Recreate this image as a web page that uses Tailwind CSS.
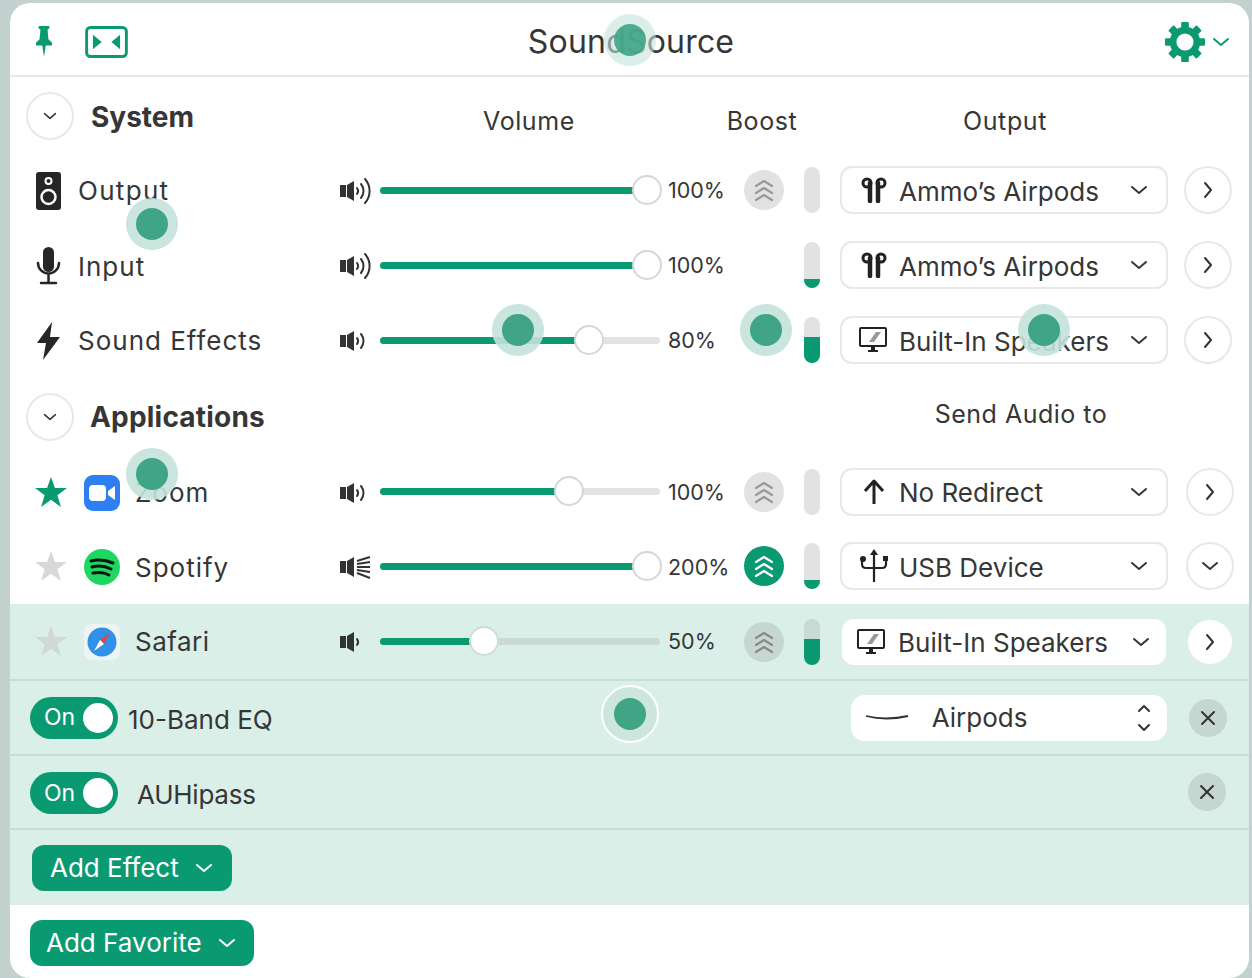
<!DOCTYPE html>
<html lang="en">
<head>
  <meta charset="UTF-8">
  <title>SoundSource</title>
  <script src="https://cdn.jsdelivr.net/npm/@tailwindcss/browser@4"></script>
</head>
<body class="bg-[#c3d2ce] h-[978px] w-[1252px] overflow-hidden font-['Inter',sans-serif] text-[#363636] text-[26px]">
  <!-- shared icons -->
  <svg class="hidden">
    <symbol id="spk" viewBox="0 0 14 28"><path d="M0 8h6v12H0zM7 8l7-4v20l-7-4z" fill="#333"/></symbol>
    <symbol id="airpods" viewBox="0 0 26 26">
      <circle cx="6" cy="6" r="4" fill="none" stroke="#222" stroke-width="3"/>
      <path d="M9 6v18" stroke="#222" stroke-width="4.500" stroke-linecap="round"/>
      <circle cx="20" cy="6" r="4" fill="none" stroke="#222" stroke-width="3"/>
      <path d="M17 6v18" stroke="#222" stroke-width="4.500" stroke-linecap="round"/>
    </symbol>
    <symbol id="monitor" viewBox="0 0 28 28">
      <rect x="1" y="2" width="26" height="18" rx="1" fill="none" stroke="#222" stroke-width="2"/>
      <path d="M10 16l7-10h5l-7 10z" fill="#999"/>
      <path d="M12 20h4v4h3v2H9v-2h3z" fill="#222"/>
    </symbol>
    <symbol id="down" viewBox="0 0 18 10"><path d="M2 2l7 6 7-6" fill="none" stroke="currentColor" stroke-width="2" stroke-linecap="round" stroke-linejoin="round"/></symbol>
    <symbol id="right" viewBox="0 0 10 18"><path d="M2 2l6 7-6 7" fill="none" stroke="#333" stroke-width="2" stroke-linecap="round" stroke-linejoin="round"/></symbol>
    <symbol id="boost" viewBox="0 0 20 24"><path d="M2 8l8-5 8 5M2 15l8-5 8 5M2 22l8-5 8 5" fill="none" stroke="currentColor" stroke-width="2.200" stroke-linecap="round" stroke-linejoin="round"/></symbol>
    <symbol id="star" viewBox="0 0 34 32"><path d="M17 0l4.200 11.800H34l-10.200 7.600L27.600 32 17 24.200 6.400 32l3.800-12.600L0 11.800h12.800z" fill="currentColor"/></symbol>
  </svg>

  <div class="pt-[3px] pl-[10px] w-[1249px]">
    <div class="bg-white rounded-[20px] overflow-hidden h-[975px] relative">

      <!-- title bar -->
      <div class="h-[74px] border-b-2 border-[#e6e8e8] grid grid-cols-3 items-center pl-[26px] pr-[19px] pt-[5px]">
        <div class="flex items-center gap-[33px]">
          <svg class="w-[16px] h-[35px]" viewBox="0 0 18 35"><path d="M3 0h12v3l-2 1 1 11 4 4v3H0v-3l4-4 1-11-2-1zM7 22h4l-2 13z" fill="#0a9a72"/></svg>
          <svg class="w-[43px] h-[32px]" viewBox="0 0 44 33"><rect x="1.500" y="1.500" width="41" height="30" rx="4" fill="none" stroke="#0a9a72" stroke-width="3"/><path d="M8 9l9 7.500-9 7.500zM36 9l-9 7.500 9 7.500z" fill="#0a9a72"/></svg>
        </div>
        <div class="text-center text-[32px] tracking-[0.2px] pr-[4px]">SoundSource</div>
        <div class="flex items-center justify-end gap-[7px]">
          <svg class="w-[40px] h-[40px]" viewBox="0 0 42 42">
            <circle cx="21" cy="21" r="12.500" fill="none" stroke="#0a9a72" stroke-width="7"/>
            <g fill="#0a9a72">
              <rect x="17" y="0" width="8" height="8" rx="1"/><rect x="17" y="34" width="8" height="8" rx="1"/>
              <rect x="0" y="17" width="8" height="8" rx="1"/><rect x="34" y="17" width="8" height="8" rx="1"/>
              <rect x="17" y="0" width="8" height="8" rx="1" transform="rotate(45 21 21)"/><rect x="17" y="34" width="8" height="8" rx="1" transform="rotate(45 21 21)"/>
              <rect x="0" y="17" width="8" height="8" rx="1" transform="rotate(45 21 21)"/><rect x="34" y="17" width="8" height="8" rx="1" transform="rotate(45 21 21)"/>
            </g>
          </svg>
          <svg class="w-[18px] h-[10px] text-[#0a9a72]"><use href="#down"/></svg>
        </div>
      </div>

      <!-- System heading -->
      <div class="h-[76px] flex items-center pt-[2px]">
        <div class="w-[389px] flex items-center pl-[16px] gap-[17px]">
          <div class="w-[48px] h-[48px] rounded-full border-2 border-[#e8e8e8] flex items-center justify-center"><svg class="w-[14px] h-[8px]"><use href="#down"/></svg></div>
          <span class="font-bold text-[28px] pt-[2px]">System</span>
        </div>
        <div class="w-[260px] text-center text-[25px] pt-[12px] tracking-[0.6px]">Volume</div>
        <div class="w-[206px] text-center text-[25px] pt-[12px] tracking-[0.6px]">Boost</div>
        <div class="w-[280px] text-center text-[25px] pt-[12px] tracking-[0.6px]">Output</div>
      </div>

      <!-- Output -->
      <div class="h-[75px] flex items-center">
        <div class="w-[328px] flex items-center pl-[26px] gap-[17px] tracking-[1.300px]">
          <svg class="w-[25px] h-[38px]" viewBox="0 0 25 38"><rect width="25" height="38" rx="3" fill="#262626"/><circle cx="12.500" cy="9" r="3" fill="none" stroke="#fff" stroke-width="2"/><circle cx="12.500" cy="25" r="7" fill="none" stroke="#fff" stroke-width="2.500"/></svg>
          <span>Output</span>
        </div>
        <div class="w-[42px] flex items-center">
          <svg class="w-[14px] h-[28px] ml-[2px]"><use href="#spk"/></svg>
          <svg class="w-[18px] h-[28px]" viewBox="0 0 18 28"><path d="M3 11a5 5 0 0 1 0 6M7 7a11 11 0 0 1 0 14M11 2a18 18 0 0 1 0 24" fill="none" stroke="#333" stroke-width="2" stroke-linecap="round"/></svg>
        </div>
        <div class="w-[280px] h-[7px] rounded-full bg-[#e3e3e3] relative"><div class="h-full w-[267px] rounded-full bg-[#0a9a72]"></div><div class="absolute left-[252px] top-[-12px] w-[30px] h-[30px] rounded-full bg-white border-2 border-[#d6d6d6]"></div></div>
        <div class="w-[84px] pl-[8px] text-[21.500px]">100%</div>
        <div class="w-[40px] h-[40px] mb-[2px] rounded-full bg-[#e2e2e2] text-[#999] flex items-center justify-center"><svg class="w-[20px] h-[24px]"><use href="#boost"/></svg></div>
        <div class="w-[16px] h-[46px] mb-[2px] ml-[20px] rounded-[8px] bg-[#e2e2e2]"></div>
        <div class="w-[328px] h-[48px] mb-[2px] ml-[20px] rounded-[12px] border-2 border-[#e8e8e8] flex items-center pl-[19px] pr-[18px]">
          <svg class="w-[26px] h-[26px] mr-[12px]"><use href="#airpods"/></svg>
          <span class="flex-1 pt-[3px]">Ammo’s Airpods</span>
          <svg class="w-[18px] h-[10px]"><use href="#down"/></svg>
        </div>
        <div class="w-[48px] h-[48px] mb-[2px] ml-[16px] rounded-full border-2 border-[#e8e8e8] flex items-center justify-center"><svg class="w-[10px] h-[18px]"><use href="#right"/></svg></div>
      </div>

      <!-- Input -->
      <div class="h-[75px] flex items-center">
        <div class="w-[328px] flex items-center pl-[26px] gap-[17px] tracking-[1px]">
          <svg class="w-[25px] h-[38px]" viewBox="0 0 25 38"><rect x="7" y="0" width="11" height="25" rx="5.500" fill="#262626"/><path d="M2 16a10.500 10.500 0 0 0 21 0M12.500 27v8M5 36h15" fill="none" stroke="#262626" stroke-width="2.500" stroke-linecap="round"/></svg>
          <span class="pt-[2px]">Input</span>
        </div>
        <div class="w-[42px] flex items-center">
          <svg class="w-[14px] h-[28px] ml-[2px]"><use href="#spk"/></svg>
          <svg class="w-[18px] h-[28px]" viewBox="0 0 18 28"><path d="M3 11a5 5 0 0 1 0 6M7 7a11 11 0 0 1 0 14M11 2a18 18 0 0 1 0 24" fill="none" stroke="#333" stroke-width="2" stroke-linecap="round"/></svg>
        </div>
        <div class="w-[280px] h-[7px] rounded-full bg-[#e3e3e3] relative"><div class="h-full w-[267px] rounded-full bg-[#0a9a72]"></div><div class="absolute left-[252px] top-[-12px] w-[30px] h-[30px] rounded-full bg-white border-2 border-[#d6d6d6]"></div></div>
        <div class="w-[84px] pl-[8px] text-[21.500px]">100%</div>
        <div class="w-[40px] h-[40px]"></div>
        <div class="w-[16px] h-[46px] mb-[2px] ml-[20px] rounded-[8px] bg-[#e2e2e2] overflow-hidden flex items-end"><div class="w-full h-[9px] bg-[#0a9a72]"></div></div>
        <div class="w-[328px] h-[48px] mb-[2px] ml-[20px] rounded-[12px] border-2 border-[#e8e8e8] flex items-center pl-[19px] pr-[18px]">
          <svg class="w-[26px] h-[26px] mr-[12px]"><use href="#airpods"/></svg>
          <span class="flex-1 pt-[3px]">Ammo’s Airpods</span>
          <svg class="w-[18px] h-[10px]"><use href="#down"/></svg>
        </div>
        <div class="w-[48px] h-[48px] mb-[2px] ml-[16px] rounded-full border-2 border-[#e8e8e8] flex items-center justify-center"><svg class="w-[10px] h-[18px]"><use href="#right"/></svg></div>
      </div>

      <!-- Sound Effects -->
      <div class="h-[75px] flex items-center">
        <div class="w-[328px] flex items-center pl-[26px] gap-[17px] tracking-[1px]">
          <svg class="w-[25px] h-[38px]" viewBox="0 0 25 38"><path d="M16 0L1 21h9L7 38l17-23h-10z" fill="#262626"/></svg>
          <span>Sound Effects</span>
        </div>
        <div class="w-[42px] flex items-center">
          <svg class="w-[14px] h-[28px] ml-[2px]"><use href="#spk"/></svg>
          <svg class="w-[18px] h-[28px]" viewBox="0 0 18 28"><path d="M3 11a5 5 0 0 1 0 6M7 7a11 11 0 0 1 0 14" fill="none" stroke="#333" stroke-width="2" stroke-linecap="round"/></svg>
        </div>
        <div class="w-[280px] h-[7px] rounded-full bg-[#e3e3e3] relative"><div class="h-full w-[209px] rounded-full bg-[#0a9a72]"></div><div class="absolute left-[194px] top-[-12px] w-[30px] h-[30px] rounded-full bg-white border-2 border-[#d6d6d6]"></div></div>
        <div class="w-[84px] pl-[8px] text-[21.500px]">80%</div>
        <div class="w-[40px] h-[40px]"></div>
        <div class="w-[16px] h-[46px] mb-[2px] ml-[20px] rounded-[8px] bg-[#e2e2e2] overflow-hidden flex items-end"><div class="w-full h-[26px] bg-[#0a9a72]"></div></div>
        <div class="w-[328px] h-[48px] mb-[2px] ml-[20px] rounded-[12px] border-2 border-[#e8e8e8] flex items-center pl-[17px] pr-[18px]">
          <svg class="w-[28px] h-[28px] mr-[12px]"><use href="#monitor"/></svg>
          <span class="flex-1 pt-[3px]">Built-In Speakers</span>
          <svg class="w-[18px] h-[10px]"><use href="#down"/></svg>
        </div>
        <div class="w-[48px] h-[48px] mb-[2px] ml-[16px] rounded-full border-2 border-[#e8e8e8] flex items-center justify-center"><svg class="w-[10px] h-[18px]"><use href="#right"/></svg></div>
      </div>

      <!-- Applications heading -->
      <div class="h-[77px] flex items-center">
        <div class="w-[811px] flex items-center pl-[16px] gap-[17px]">
          <div class="w-[48px] h-[48px] rounded-full border-2 border-[#e8e8e8] flex items-center justify-center"><svg class="w-[14px] h-[8px]"><use href="#down"/></svg></div>
          <span class="font-bold text-[28px] tracking-[0.2px] ml-[-1px]">Applications</span>
        </div>
        <div class="w-[400px] text-center text-[25px] pb-[4px] tracking-[0.5px]">Send Audio to</div>
      </div>

      <!-- Zoom -->
      <div class="h-[75px] flex items-center">
        <div class="w-[328px] flex items-center pl-[25px] tracking-[1px]">
          <svg class="w-[32px] h-[30px] mb-[2px] text-[#0a9a72] mr-[1px]"><use href="#star"/></svg>
          <div class="w-[36px] h-[36px] ml-[16px] rounded-[9px] bg-[#2d7ff2] flex items-center justify-center">
            <svg class="w-[26px] h-[16px]" viewBox="0 0 26 16"><rect width="17" height="16" rx="4" fill="#fff"/><path d="M19 6l7-5v14l-7-5z" fill="#fff"/></svg>
          </div>
          <span class="ml-[15px]">Zoom</span>
        </div>
        <div class="w-[42px] flex items-center">
          <svg class="w-[14px] h-[28px] ml-[2px]"><use href="#spk"/></svg>
          <svg class="w-[18px] h-[28px]" viewBox="0 0 18 28"><path d="M3 11a5 5 0 0 1 0 6M7 7a11 11 0 0 1 0 14" fill="none" stroke="#333" stroke-width="2" stroke-linecap="round"/></svg>
        </div>
        <div class="w-[280px] h-[7px] mb-[2px] rounded-full bg-[#e3e3e3] relative"><div class="h-full w-[189px] rounded-full bg-[#0a9a72]"></div><div class="absolute left-[174px] top-[-12px] w-[30px] h-[30px] rounded-full bg-white border-2 border-[#d6d6d6]"></div></div>
        <div class="w-[84px] pl-[8px] text-[21.500px]">100%</div>
        <div class="w-[40px] h-[40px] mb-[2px] rounded-full bg-[#e2e2e2] text-[#999] flex items-center justify-center"><svg class="w-[20px] h-[24px]"><use href="#boost"/></svg></div>
        <div class="w-[16px] h-[46px] mb-[2px] ml-[20px] rounded-[8px] bg-[#e2e2e2]"></div>
        <div class="w-[328px] h-[48px] mb-[2px] ml-[20px] rounded-[12px] border-2 border-[#e8e8e8] flex items-center pl-[21px] pr-[18px]">
          <svg class="w-[22px] h-[26px] mr-[14px]" viewBox="0 0 22 26"><path d="M11 25V3M2 12l9-10 9 10" fill="none" stroke="#222" stroke-width="3" stroke-linejoin="round"/></svg>
          <span class="flex-1 pt-[2px]">No Redirect</span>
          <svg class="w-[18px] h-[10px]"><use href="#down"/></svg>
        </div>
        <div class="w-[48px] h-[48px] mb-[2px] ml-[18px] rounded-full border-2 border-[#e8e8e8] flex items-center justify-center"><svg class="w-[10px] h-[18px]"><use href="#right"/></svg></div>
      </div>

      <!-- Spotify -->
      <div class="h-[74px] flex items-center">
        <div class="w-[328px] flex items-center pl-[25px] tracking-[1px]">
          <svg class="w-[32px] h-[30px] mb-[2px] mr-[1px] text-[#d8d8d8]"><use href="#star"/></svg>
          <svg class="w-[36px] h-[36px] ml-[16px]" viewBox="0 0 36 36"><circle cx="18" cy="18" r="18" fill="#1ed760"/><path d="M7 12c8-2 15-1 22 2M8 18c7-2 13-1 19 2M9 24c6-1 11-1 16 2" fill="none" stroke="#111" stroke-width="3" stroke-linecap="round"/></svg>
          <span class="ml-[15px]">Spotify</span>
        </div>
        <div class="w-[42px] flex items-center">
          <svg class="w-[14px] h-[28px] ml-[2px]"><use href="#spk"/></svg>
          <svg class="w-[18px] h-[28px]" viewBox="0 0 18 28"><path d="M3 8l13-4M3 11l13-2M3 14h13M3 17l13 2M3 20l13 5" fill="none" stroke="#333" stroke-width="2"/></svg>
        </div>
        <div class="w-[280px] h-[7px] mb-[2px] rounded-full bg-[#e3e3e3] relative"><div class="h-full w-[267px] rounded-full bg-[#0a9a72]"></div><div class="absolute left-[252px] top-[-12px] w-[30px] h-[30px] rounded-full bg-white border-2 border-[#d6d6d6]"></div></div>
        <div class="w-[84px] pl-[8px] text-[21.500px]">200%</div>
        <div class="w-[40px] h-[40px] mb-[2px] rounded-full bg-[#0a9a72] text-white flex items-center justify-center"><svg class="w-[20px] h-[24px]"><use href="#boost"/></svg></div>
        <div class="w-[16px] h-[46px] mb-[2px] ml-[20px] rounded-[8px] bg-[#e2e2e2] overflow-hidden flex items-end"><div class="w-full h-[9px] bg-[#0a9a72]"></div></div>
        <div class="w-[328px] h-[48px] mb-[2px] ml-[20px] rounded-[12px] border-2 border-[#e8e8e8] flex items-center pl-[18px] pr-[18px]">
          <svg class="w-[28px] h-[34px] mr-[11px]" viewBox="0 0 28 34"><path d="M14 33V2M2 10v5q0 4 4 4h16q4 0 4-4v-5" fill="none" stroke="#222" stroke-width="2.200"/><path d="M14 0l-4 6h8z" fill="#222"/><circle cx="3" cy="10" r="3" fill="#222"/><rect x="23" y="7" width="5" height="5" fill="#222"/></svg>
          <span class="flex-1 pt-[2px]">USB Device</span>
          <svg class="w-[18px] h-[10px]"><use href="#down"/></svg>
        </div>
        <div class="w-[48px] h-[48px] mb-[2px] ml-[18px] rounded-full border-2 border-[#e8e8e8] flex items-center justify-center"><svg class="w-[18px] h-[10px]"><use href="#down"/></svg></div>
      </div>

      <!-- Safari and effects band -->
      <div class="bg-[#d9efe8]">
        <div class="h-[77px] flex items-center border-b-2 border-[#c9ddd6]">
          <div class="w-[328px] flex items-center pl-[25px] tracking-[0.500px]">
            <svg class="w-[32px] h-[30px] mb-[2px] mr-[1px] text-[#d2d8d6]"><use href="#star"/></svg>
            <div class="w-[36px] h-[36px] ml-[16px] rounded-[8px] bg-[#eef3f4] flex items-center justify-center">
              <svg class="w-[30px] h-[30px]" viewBox="0 0 30 30"><circle cx="15" cy="15" r="14.500" fill="#2f92e8"/><path d="M23 6L13 13l4 4z" fill="#e8453c"/><path d="M7 24l6-11 4 4z" fill="#fff"/></svg>
            </div>
            <span class="ml-[15px]">Safari</span>
          </div>
          <div class="w-[42px] flex items-center">
            <svg class="w-[14px] h-[28px] ml-[2px]"><use href="#spk"/></svg>
            <svg class="w-[18px] h-[28px]" viewBox="0 0 18 28"><path d="M3 11a5 5 0 0 1 0 6" fill="none" stroke="#333" stroke-width="2" stroke-linecap="round"/></svg>
          </div>
          <div class="w-[280px] h-[7px] rounded-full bg-[#c9dad5] relative"><div class="h-full w-[104px] rounded-full bg-[#0a9a72]"></div><div class="absolute left-[89px] top-[-12px] w-[30px] h-[30px] rounded-full bg-white border-2 border-[#cfdcd8]"></div></div>
          <div class="w-[84px] pl-[8px] text-[21.500px]">50%</div>
          <div class="w-[40px] h-[40px] rounded-full bg-[#c6d6d1] text-[#888] flex items-center justify-center"><svg class="w-[20px] h-[24px]"><use href="#boost"/></svg></div>
          <div class="w-[16px] h-[46px] ml-[20px] rounded-[8px] bg-[#c9dad5] overflow-hidden flex items-end"><div class="w-full h-[26px] bg-[#0a9a72]"></div></div>
          <div class="w-[324px] h-[46px] ml-[22px] rounded-[12px] bg-white flex items-center pl-[15px] pr-[16px]">
            <svg class="w-[28px] h-[28px] mr-[13px]"><use href="#monitor"/></svg>
            <span class="flex-1 pt-[1px]">Built-In Speakers</span>
            <svg class="w-[18px] h-[10px]"><use href="#down"/></svg>
          </div>
          <div class="w-[44px] h-[44px] ml-[22px] rounded-full bg-white flex items-center justify-center"><svg class="w-[10px] h-[18px]"><use href="#right"/></svg></div>
        </div>

        <div class="h-[75px] flex items-center border-b-2 border-[#c9ddd6] pl-[20px]">
          <div class="w-[88px] h-[42px] rounded-full bg-[#0a9a72] flex items-center justify-between pl-[14px] pr-[5px] text-white text-[23px]">On<div class="w-[30px] h-[30px] rounded-full bg-white"></div></div>
          <span class="ml-[10px] pt-[3px]">10-Band EQ</span>
          <div class="w-[316px] h-[46px] ml-[578px] rounded-[14px] bg-white flex items-center pl-[14px] pr-[16px]">
            <svg class="w-[44px] h-[8px] mr-[23px]" viewBox="0 0 44 8"><path d="M1 2q20 5 42 0" fill="none" stroke="#333" stroke-width="1.800"/></svg>
            <span class="flex-1">Airpods</span>
            <svg class="w-[14px] h-[30px]" viewBox="0 0 14 30"><path d="M2 8l5-5 5 5M2 22l5 5 5-5" fill="none" stroke="#333" stroke-width="2" stroke-linecap="round" stroke-linejoin="round"/></svg>
          </div>
          <div class="w-[38px] h-[38px] ml-[22px] rounded-full bg-[#c6d6d1] flex items-center justify-center"><svg class="w-[16px] h-[16px]" viewBox="0 0 16 16"><path d="M2 2l12 12M14 2L2 14" stroke="#333" stroke-width="2" stroke-linecap="round"/></svg></div>
        </div>

        <div class="h-[74px] flex items-center border-b-2 border-[#c9ddd6] pl-[20px]">
          <div class="w-[88px] h-[42px] mt-[2px] rounded-full bg-[#0a9a72] flex items-center justify-between pl-[14px] pr-[5px] text-white text-[23px]">On<div class="w-[30px] h-[30px] rounded-full bg-white"></div></div>
          <span class="ml-[19px] flex-1 pt-[4px] tracking-[-0.250px]">AUHipass</span>
          <div class="w-[38px] h-[38px] mr-[23px] rounded-full bg-[#c6d6d1] flex items-center justify-center"><svg class="w-[16px] h-[16px]" viewBox="0 0 16 16"><path d="M2 2l12 12M14 2L2 14" stroke="#333" stroke-width="2" stroke-linecap="round"/></svg></div>
        </div>

        <div class="h-[75px] flex items-center border-b-2 border-[#e2ebe8] pl-[22px] pt-[2px]">
          <div class="w-[200px] h-[46px] rounded-[12px] bg-[#0a9a72] text-white flex items-center pl-[18px] gap-[16px]">Add Effect<svg class="w-[18px] h-[10px]"><use href="#down"/></svg></div>
        </div>
      </div>

      <!-- Add Favorite -->
      <div class="h-[73px] flex items-center pl-[20px] pt-[2px]">
        <div class="w-[224px] h-[46px] rounded-[12px] bg-[#0a9a72] text-white flex items-center pl-[16px] gap-[16px]">Add Favorite<svg class="w-[18px] h-[10px]"><use href="#down"/></svg></div>
      </div>

      <!-- touch markers over the window -->
      <div class="absolute left-[594px] top-[11px] w-[52px] h-[52px] rounded-full bg-[#c4e2da]/60 flex items-center justify-center"><div class="w-[32px] h-[32px] rounded-full bg-[#3fa585]/90"></div></div>
      <div class="absolute left-[116px] top-[195px] w-[52px] h-[52px] rounded-full bg-[#c4e2da]/90 flex items-center justify-center"><div class="w-[32px] h-[32px] rounded-full bg-[#3fa585]"></div></div>
      <div class="absolute left-[482px] top-[301px] w-[52px] h-[52px] rounded-full bg-[#c4e2da]/90 flex items-center justify-center"><div class="w-[32px] h-[32px] rounded-full bg-[#3fa585]"></div></div>
      <div class="absolute left-[730px] top-[301px] w-[52px] h-[52px] rounded-full bg-[#c4e2da]/90 flex items-center justify-center"><div class="w-[32px] h-[32px] rounded-full bg-[#3fa585]"></div></div>
      <div class="absolute left-[1008px] top-[301px] w-[52px] h-[52px] rounded-full bg-[#c4e2da]/90 flex items-center justify-center"><div class="w-[32px] h-[32px] rounded-full bg-[#3fa585]"></div></div>
      <div class="absolute left-[116px] top-[445px] w-[52px] h-[52px] rounded-full bg-[#c4e2da]/90 flex items-center justify-center"><div class="w-[32px] h-[32px] rounded-full bg-[#3fa585]"></div></div>
      <div class="absolute left-[591px] top-[682px] w-[58px] h-[58px] rounded-full border-2 border-white bg-[#cce6de] flex items-center justify-center"><div class="w-[32px] h-[32px] rounded-full bg-[#3fa585]"></div></div>
    </div>
  </div>
</body>
</html>
